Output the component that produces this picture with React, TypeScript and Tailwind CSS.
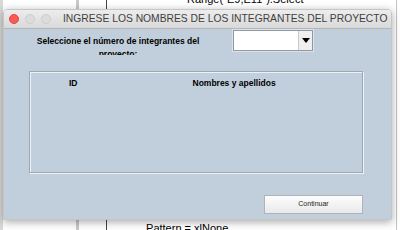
import React from "react";

export default function App() {
  return (
    <div className="relative w-[400px] h-[230px] overflow-hidden bg-white font-['Liberation_Sans',Arial,sans-serif]">
      {/* background editor bits */}
      <div className="absolute left-0 top-0 h-full w-[3px] bg-[#d9d9d9]" />
      <div className="absolute left-[76px] top-0 h-full w-[3px] bg-[#c9c9c9]" />
      <div className="absolute left-[106px] top-0 h-full w-px bg-[#444]" />
      <div className="absolute left-[396px] top-0 h-full w-px bg-[#c4c4c4]" />
      <div className="absolute left-[187px] top-[-7px] text-[11px] leading-[13px] text-black">Range("E9,E11").Select</div>
      <div className="absolute left-[143px] top-[222px] text-[11px] leading-[13px] text-black">.Pattern = xlNone</div>

      {/* window */}
      <div className="absolute left-[3px] top-[9px] w-[389px] h-[211px] flex flex-col rounded-t-[4px] overflow-hidden shadow-[0_2px_8px_rgba(0,0,0,0.35)] border border-[#c6c6c6]">
        <div className="h-[19px] shrink-0 flex items-center bg-linear-to-b from-[#ededed] to-[#d9d9d9] border-b border-[#b5b5b5]">
          <div className="ml-[5px] w-[10px] h-[10px] rounded-full bg-[#fc5a55] border border-[#e2463f]" />
          <div className="ml-[6px] w-[10px] h-[10px] rounded-full bg-[#dcdcdc] border border-[#cdcdcd]" />
          <div className="ml-[6px] w-[10px] h-[10px] rounded-full bg-[#dcdcdc] border border-[#cdcdcd]" />
          <div className="ml-[12px] text-[10.3px] leading-none text-[#3f3f3f] whitespace-nowrap">
            INGRESE LOS NOMBRES DE LOS INTEGRANTES DEL PROYECTO
          </div>
        </div>
        <div className="flex-1 bg-[#c1cedb] pl-[24px] flex flex-col">
          <div className="flex items-start mt-[1px]">
            <div className="ml-[2px] mt-[5px] w-[176px] h-[20px] overflow-hidden text-center text-[8.5px] leading-[13px] font-bold text-black">
              Seleccione el número de integrantes del proyecto:
            </div>
            <div className="ml-[27px] w-[80px] h-[21px] flex bg-white border border-[#8f99a4] shadow-[0_0_0_1px_#dde3ea]">
              <div className="flex-1" />
              <div className="w-[14px] flex items-center justify-center bg-[#efefef] border-l border-[#c9c9c9]">
                <svg width="8" height="5" viewBox="0 0 8 5">
                  <path d="M0 0 H8 L4 5 Z" fill="#000" />
                </svg>
              </div>
            </div>
          </div>
          <div className="mt-[16px] ml-[1px] w-[334px] h-[102px] border border-[#9ea8b3] shadow-[inset_1px_1px_0_#eef2f5,1px_1px_0_#eef2f5] relative flex items-start text-[8.5px] font-bold text-black leading-none">
            <span className="ml-[39px] mt-[7px]">ID</span>
            <span className="ml-[115px] mt-[7px]">Nombres y apellidos</span>
          </div>
          <div className="mt-[22px] ml-[1px] w-[334px] flex justify-end">
            <div className="w-[99px] h-[19px] flex items-center justify-center bg-linear-to-b from-[#fdfdfd] to-[#e9e9e9] border border-[#b0b4b8] text-[7px] text-[#222]">
              Continuar
            </div>
          </div>
        </div>
      </div>
    </div>
  );
}
